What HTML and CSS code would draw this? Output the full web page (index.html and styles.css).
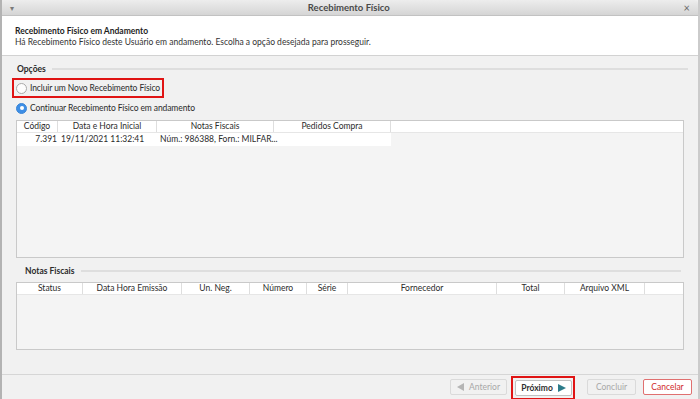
FILE: index.html
```html
<!DOCTYPE html>
<html lang="pt-BR">
<head>
  <meta charset="UTF-8" />
  <meta name="viewport" content="width=device-width, initial-scale=1.0"/>
  <title>Recebimento Físico</title>
  <link rel="stylesheet" href="styles.css">
</head>
<body>
  <div class="window">
    <div class="titlebar">
      <span class="menu-arrow">▾</span>
      <span class="title">Recebimento Físico</span>
      <span class="close">×</span>
    </div>

    <div class="header">
      <h2>Recebimento Físico em Andamento</h2>
      <p>Há Recebimento Físico deste Usuário em andamento. Escolha a opção desejada para prosseguir.</p>
    </div>

    <div class="content">
      <div class="group-title opcoes">
        <span>Opções</span>
        <div class="group-line"></div>
      </div>

      <div class="radio-row highlight">
        <div class="radio"></div>
        <span>Incluir um Novo Recebimento Físico</span>
      </div>
      <div class="radio-row second">
        <div class="radio checked"></div>
        <span>Continuar Recebimento Físico em andamento</span>
      </div>

      <div class="table table-top">
        <div class="row head">
          <div class="cell" style="width: 41px">Código</div>
          <div class="cell" style="width: 99px">Data e Hora Inicial</div>
          <div class="cell" style="width: 117px">Notas Fiscais</div>
          <div class="cell" style="width: 117px">Pedidos Compra</div>
          <div class="cell filler"></div>
        </div>
        <div class="row data">
          <div class="cell num" style="width: 41px">7.391</div>
          <div class="cell left" style="width: 99px">19/11/2021 11:32:41</div>
          <div class="cell left" style="width: 117px">Núm.: 986388, Forn.: MILFAR...</div>
          <div class="cell" style="width: 117px"></div>
        </div>
      </div>

      <div class="group-title notas">
        <span>Notas Fiscais</span>
        <div class="group-line"></div>
      </div>

      <div class="table table-bottom">
        <div class="row head">
          <div class="cell" style="width: 66px">Status</div>
          <div class="cell" style="width: 99px">Data Hora Emissão</div>
          <div class="cell" style="width: 68px">Un. Neg.</div>
          <div class="cell" style="width: 57px">Número</div>
          <div class="cell" style="width: 41px">Série</div>
          <div class="cell" style="width: 149px">Fornecedor</div>
          <div class="cell" style="width: 68px">Total</div>
          <div class="cell" style="width: 80px">Arquivo XML</div>
          <div class="cell filler"></div>
        </div>
      </div>
    </div>

    <div class="footer">
      <div class="btn disabled anterior"><span class="arrow-left"></span>Anterior</div>
      <div class="btn-highlight">
        <div class="btn next">Próximo<span class="arrow-right"></span></div>
      </div>
      <div class="btn disabled concluir">Concluir</div>
      <div class="btn cancel">Cancelar</div>
    </div>
  </div>
</body>
</html>
```

FILE: styles.css
```css
body {
  margin: 0;
  padding: 0;
  font-family: 'Lato', 'Liberation Sans', sans-serif;
  font-size: 8.5px;
  color: #2b2b2b;
  background-color: #f1f1f1;
}

.window {
  height: 399px;
  display: flex;
  flex-direction: column;
  border-left: 2px solid #b3b3b3;
  border-right: 2px solid #cbcbcb;
  box-sizing: border-box;
  background-color: #f1f1f1;
}

.titlebar {
  height: 16px;
  flex-shrink: 0;
  display: flex;
  align-items: center;
  justify-content: space-between;
  padding: 0 8px;
  background: linear-gradient(#ededed, #d5d5d5);
  border-bottom: 1px solid #c2c2c2;
  box-sizing: border-box;
  border-top-right-radius: 4px;
}

.titlebar .title {
  font-weight: 700;
  font-size: 9.5px;
  color: #4a4a4a;
}

.menu-arrow {
  font-size: 8px;
  color: #7a7a7a;
}

.close {
  font-size: 11px;
  color: #6a6a6a;
}

.header {
  height: 40px;
  flex-shrink: 0;
  background-color: #ffffff;
  border-bottom: 1px solid #d2d2d2;
  box-sizing: border-box;
  padding: 10px 13px 0;
}

h2 {
  margin: 0;
  font-size: 8.5px;
  font-weight: 700;
  color: #1e1e1e;
  line-height: 11px;
}

.header p {
  margin: 0;
  line-height: 11px;
  color: #333;
}

.content {
  flex: 1;
  padding: 7px 14px 0 14px;
}

.group-title {
  display: flex;
  align-items: center;
  height: 12px;
  font-weight: 700;
  color: #2a2a2a;
  padding-left: 1px;
}

.group-title span {
  margin-right: 6px;
}

.group-line {
  flex: 1;
  height: 2px;
  background-color: #dedede;
}

.opcoes {
  margin-right: -4px;
}

.notas {
  margin-top: 7px;
  padding-left: 9px;
  margin-right: 3px;
}

.radio-row {
  display: flex;
  align-items: center;
  gap: 3px;
  height: 16px;
  white-space: nowrap;
  letter-spacing: -0.1px;
}

.radio-row.highlight {
  margin-top: 3px;
  margin-left: -4px;
  width: 152px;
  height: 20px;
  border: 2px solid #e01414;
  box-sizing: border-box;
  padding-left: 2px;
}

.radio-row.second {
  margin-top: 2px;
}

.radio {
  width: 11px;
  height: 11px;
  flex-shrink: 0;
  border-radius: 50%;
  border: 1px solid #a9a9a9;
  background-color: #fdfdfd;
  box-sizing: border-box;
}

.radio.checked {
  background-color: #3d8ee6;
  border-color: #3c86d6;
  display: flex;
  justify-content: center;
  align-items: center;
}

.radio.checked::after {
  content: "";
  width: 4px;
  height: 4px;
  border-radius: 50%;
  background-color: white;
}

.table {
  border: 1px solid #c9c9c9;
  background-color: #f4f4f4;
  box-sizing: border-box;
}

.table-top {
  margin-top: 4px;
  height: 138px;
}

.table-bottom {
  margin-top: 5px;
  height: 68px;
}

.row {
  display: flex;
}

.row.head {
  height: 11px;
  background-color: #ffffff;
  border-bottom: 1px solid #e6e6e6;
}

.row.data {
  width: 374px;
  height: 13px;
  align-items: center;
  background-color: #ffffff;
}

.cell {
  box-sizing: border-box;
  text-align: center;
  border-right: 1px solid #dedede;
  line-height: 10px;
  white-space: nowrap;
  overflow: hidden;
}

.cell.filler {
  flex: 1;
  border-right: none;
}

.row.data .cell {
  border-right: none;
  line-height: 13px;
  height: 13px;
  overflow: visible;
}

.cell.num {
  text-align: right;
  padding-right: 1px;
}

.cell.left {
  text-align: left;
  padding-left: 3px;
}

.footer {
  height: 25px;
  flex-shrink: 0;
  border-top: 1px solid #d6d6d6;
  box-sizing: border-box;
  display: flex;
  justify-content: flex-end;
  align-items: center;
  padding-right: 6px;
}

.btn {
  height: 16px;
  box-sizing: border-box;
  border: 1px solid #c2c2c2;
  border-radius: 2px;
  background-color: #fbfbfb;
  display: flex;
  align-items: center;
  justify-content: center;
  gap: 5px;
  font-size: 8.5px;
}

.btn.disabled {
  width: 57px;
  color: #a8a8a8;
  border-color: #dadada;
  background-color: #f1f1f1;
}

.btn.anterior {
  margin-right: 4px;
}

.btn.concluir {
  width: 49px;
  margin-left: 12px;
  margin-right: 7px;
}

.btn-highlight {
  border: 2px solid #e01414;
  padding: 2px 1px 2px 2px;
  margin-top: 1px;
  height: 24px;
  box-sizing: border-box;
}

.btn.next {
  width: 57px;
  background-color: #ffffff;
  font-weight: 700;
  color: #2f2f2f;
}

.btn.cancel {
  width: 49px;
  border-color: #e07070;
  background-color: #ffffff;
  color: #d02a2a;
}

.arrow-left {
  width: 0;
  height: 0;
  border-top: 4px solid transparent;
  border-bottom: 4px solid transparent;
  border-right: 7px solid #b5b5b5;
}

.arrow-right {
  width: 0;
  height: 0;
  border-top: 4.5px solid transparent;
  border-bottom: 4.5px solid transparent;
  border-left: 8px solid #2d7c8a;
}
```
